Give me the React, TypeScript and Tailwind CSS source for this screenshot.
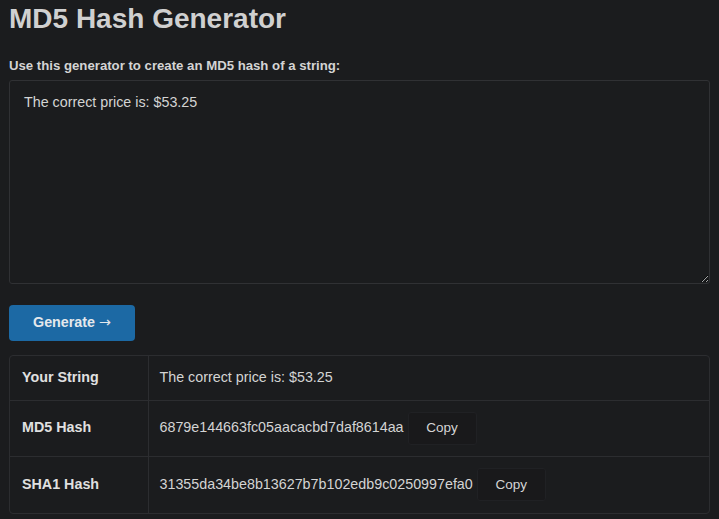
import { useState } from "react";

const rows = [
  { label: "Your String", value: "The correct price is: $53.25", copy: false, h: "h-[44px]" },
  { label: "MD5 Hash", value: "6879e144663fc05aacacbd7daf8614aa", copy: true, h: "h-[56px]" },
  { label: "SHA1 Hash", value: "31355da34be8b13627b7b102edb9c0250997efa0", copy: true, h: "h-[57px]" },
];

export default function App() {
  const [text, setText] = useState("The correct price is: $53.25");

  return (
    <div className="min-h-screen bg-[#1b1c1e] text-[#d4d4d4] px-[9px] pb-4 font-['Liberation_Sans',Arial,sans-serif]">
      <h1 className="text-[28px] leading-[34px] font-bold text-[#d0d0d0] pt-[2px]">MD5 Hash Generator</h1>

      <label className="block mt-[22px] text-[13.2px] leading-[16px] font-bold text-[#d4d4d4]">
        Use this generator to create an MD5 hash of a string:
      </label>

      <textarea
        value={text}
        onChange={(e) => setText(e.target.value)}
        className="mt-[6px] block w-full h-[204px] bg-[#1b1c1e] border border-[#303134] rounded-[3px] px-[14px] py-[11px] text-[14.3px] leading-[20px] text-[#d4d4d4] outline-none resize"
      />

      <button className="mt-[21px] h-[36px] w-[126px] rounded-[4px] bg-[#1c69a4] text-[14.3px] font-bold text-[#e4e8ec]">
        Generate <span className="font-['DejaVu_Sans',sans-serif] font-normal">→</span>
      </button>

      <div className="mt-[14px] border border-[#2c2d30] rounded-[4px] overflow-hidden">
        <table className="w-full border-collapse text-[14.3px]">
          <tbody>
            {rows.map((r, i) => (
              <tr key={r.label} className={`${r.h} ${i > 0 ? "border-t border-[#2c2d30]" : ""}`}>
                <td className="w-[138px] pl-[12px] font-bold text-[#e0e0e0] border-r border-[#2c2d30]">{r.label}</td>
                <td className="pl-[11px] text-[#d4d4d4]">
                  <div className="flex items-center gap-[4px]">
                    <span>{r.value}</span>
                    {r.copy && (
                      <button className="h-[33px] w-[69px] rounded-[3px] border border-[#202124] bg-[#19191b] text-[13.5px] text-[#d4d4d4]">
                        Copy
                      </button>
                    )}
                  </div>
                </td>
              </tr>
            ))}
          </tbody>
        </table>
      </div>
    </div>
  );
}
